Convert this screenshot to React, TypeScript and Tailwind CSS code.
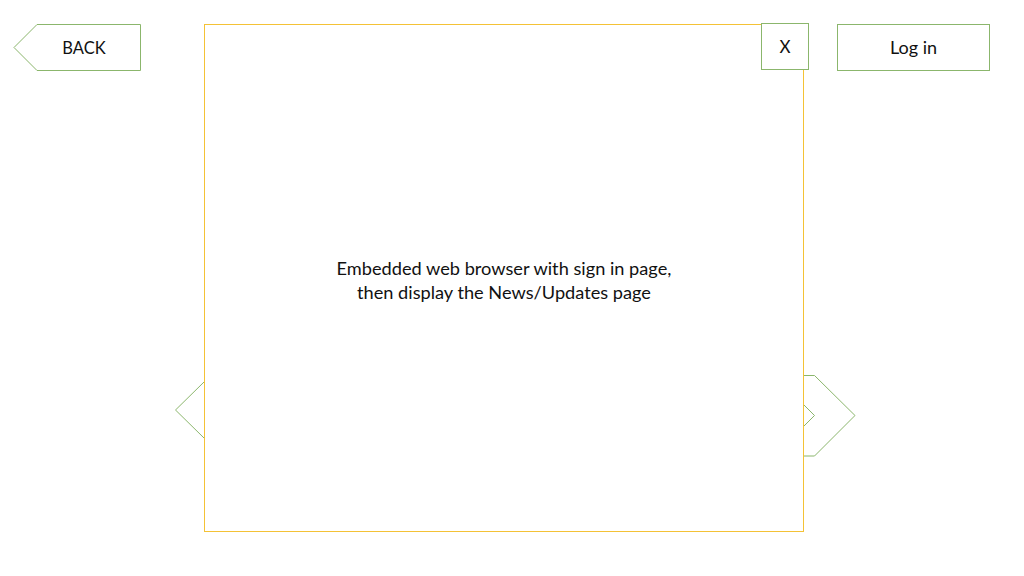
import React from "react";

const GREEN = "#8bb66c";

export default function App() {
  return (
    <div className="w-[1024px] h-[576px] bg-white flex text-[#111] overflow-hidden" style={{ fontFamily: "Lato, 'Open Sans', sans-serif" }}>
      {/* left column */}
      <div className="w-[204px] shrink-0 flex flex-col">
        <div className="relative ml-[13px] mt-[23px] w-[129px] h-[49px]">
          <svg className="absolute inset-0" width="129" height="49" viewBox="0 0 129 49">
            <polygon points="1,24.5 24,1.5 127.5,1.5 127.5,47.5 24,47.5" fill="white" stroke={GREEN} strokeWidth="1" />
          </svg>
          <div className="relative h-full flex items-center justify-center pl-[13px] pt-[1px] text-[16.5px]">BACK</div>
        </div>
        <svg className="ml-[174px] mt-[309px]" width="30" height="58" viewBox="0 0 30 58">
          <polyline points="30,1 1.5,29 30,57" fill="none" stroke={GREEN} strokeWidth="1" />
        </svg>
      </div>

      {/* browser panel */}
      <div className="relative w-[600px] h-[508px] mt-[24px] shrink-0 border border-[#f4c236] flex items-center justify-center">
        <div className="text-center text-[18.2px] leading-[24px] mt-[3px]">
          <div>Embedded web browser with sign in page,</div>
          <div>then display the News/Updates page</div>
        </div>
        <div className="absolute left-[556px] top-[-2px] w-[48px] h-[47px] bg-white border border-[#8bb66c] flex items-center justify-center text-[17px]">
          X
        </div>
      </div>

      {/* right column */}
      <div className="flex-1 flex flex-col">
        <div className="ml-[33px] mt-[24px] w-[153px] h-[47px] border border-[#8bb66c] flex items-center justify-center text-[18px]">
          Log in
        </div>
        <svg className="mt-[303px]" width="53" height="83" viewBox="0 0 53 83">
          <polyline points="0,1.5 10.5,1.5 51,41.5 10.5,82 0,82" fill="none" stroke={GREEN} strokeWidth="1" />
          <polyline points="0,31 10.5,41.5 0,52" fill="none" stroke={GREEN} strokeWidth="1" />
        </svg>
      </div>
    </div>
  );
}
